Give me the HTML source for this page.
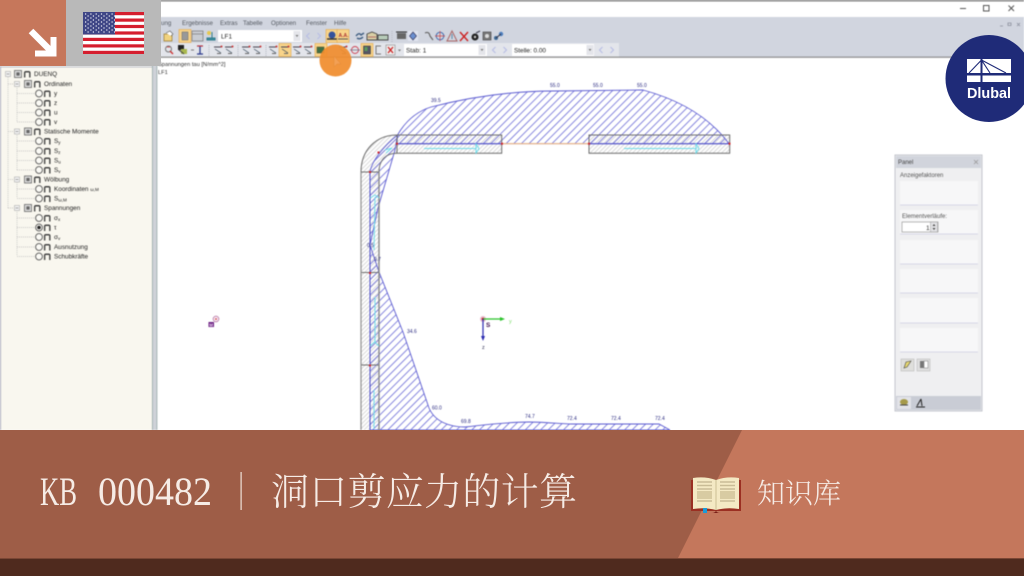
<!DOCTYPE html>
<html lang="zh"><head><meta charset="utf-8"><title>KB 000482</title>
<style>
html,body{margin:0;padding:0;background:#fff;width:1024px;height:576px;overflow:hidden}
svg{display:block}
text{font-family:"Liberation Sans",sans-serif}
.app{filter:blur(.5px)}
.m{font-size:6.2px;fill:#555a62}
.t{font-size:6.4px;fill:#222}
.v{font-size:5px;fill:#2a2a80}
.k{font-family:"Noto Serif CJK SC","Liberation Serif",serif;fill:#f6ece6}
.l{font-family:"Liberation Serif",serif;fill:#f6ece6}
</style></head><body>
<svg width="1024" height="576" viewBox="0 0 1024 576" xmlns="http://www.w3.org/2000/svg">
<defs>
<pattern id="h" width="5.400" height="5.400" patternUnits="userSpaceOnUse" patternTransform="rotate(-45)"><rect width="5.400" height=".8" y="0" fill="#6a6ad6"/></pattern>
<pattern id="g" width="3" height="3" patternUnits="userSpaceOnUse" patternTransform="rotate(-45)"><rect width="3" height=".8" fill="#d0d0d0"/></pattern>
<symbol id="ic" viewBox="0 0 7 7" overflow="visible"><path d="M.7 7V2Q.7.8 2 .8H5Q6.3.8 6.3 2V7" fill="none" stroke="#444" stroke-width="1.500"/></symbol>
<g id="rad"><circle r="3.400" fill="#fbfaf5" stroke="#555" stroke-width=".9"/></g>
<g id="leaf"><use href="#rad"/><use href="#ic" x="5" y="-3" width="6.500" height="6.500"/></g>
<g id="chk"><rect x="-3.500" y="-3.500" width="7" height="7" fill="#e2e2e2" stroke="#666" stroke-width=".8"/><rect x="-1.700" y="-1.700" width="3.400" height="3.400" fill="#666"/></g>
<g id="exp"><rect x="-2.500" y="-2.500" width="5" height="5" fill="#f5f5f5" stroke="#aaa" stroke-width=".6"/><path d="M-1.400 0H1.400" stroke="#666" stroke-width=".6"/></g>
<g id="hl"><rect x="-6" y="-6.500" width="12" height="13" fill="#f8d48a" stroke="#e5a94c" stroke-width=".6"/></g>
<g id="tb"><path d="M-4 -3H4" stroke="#8a4a4a" stroke-width="1"/><path d="M-4 -3L4 -3M-3 -1L3 3" stroke="#345" stroke-width=".7"/><circle cx="3.500" cy="-3.500" r="1" fill="#c33"/><path d="M-1 3.500H3" stroke="#666" stroke-width="1"/></g>
<g id="la"><path d="M1.500 -3L-1.500 0L1.500 3" fill="none" stroke="#b7bde4" stroke-width="1.100"/></g>
<g id="ra"><path d="M-1.500 -3L1.500 0L-1.500 3" fill="none" stroke="#b7bde4" stroke-width="1.100"/></g>
<g id="dd"><rect x="-3.500" y="-5" width="7" height="10" fill="#e4e5ea"/><path d="M-1.500 -1H1.500L0 1Z" fill="#777"/></g>
</defs>

<g class="app">
<rect width="1024" height="430" fill="#fff"/>
<rect width="1024" height="1.500" fill="#858585"/>
<rect y="17" width="1024" height="40" fill="#d1d5df"/>
<rect x="155" y="43" width="464" height="14" fill="#e3e5eb"/>
<rect y="56.600" width="1024" height="1.200" fill="#8c8c8c"/>

<!-- window controls -->
<path d="M960 8.500H966" stroke="#555" stroke-width="1"/>
<rect x="983.500" y="5.500" width="5.500" height="5.500" fill="none" stroke="#555" stroke-width="1"/>
<path d="M1008.500 5.500L1014 11M1014 5.500L1008.500 11" stroke="#555" stroke-width="1"/>
<path d="M1000 26H1003M1008 23H1011V25.500H1008ZM1017 23L1020 26M1020 23L1017 26" stroke="#8a8f9c" stroke-width=".8" fill="none"/>

<!-- menu -->
<text class="m" x="161" y="25">ung</text>
<text class="m" x="182" y="25">Ergebnisse</text>
<text class="m" x="220" y="25">Extras</text>
<text class="m" x="243" y="25">Tabelle</text>
<text class="m" x="271" y="25">Optionen</text>
<text class="m" x="306" y="25">Fenster</text>
<text class="m" x="334" y="25">Hilfe</text>

<!-- toolbar row 1 -->
<path d="M164 34H172V41H164Z" fill="#f1d27e" stroke="#9a7a30" stroke-width=".7"/><path d="M166 33L170 31L173 34L171 36" fill="#fff" stroke="#555" stroke-width=".6"/>
<use href="#hl" x="185" y="36"/><rect x="182" y="32" width="6" height="8" fill="#999" stroke="#666" stroke-width=".5"/>
<rect x="192" y="31" width="11" height="10" fill="#c9ccd2" stroke="#777" stroke-width=".7"/><path d="M192 34H203" stroke="#777" stroke-width=".7"/>
<circle cx="209" cy="33" r="2" fill="#e6c94f"/><path d="M207 38H215V40H207ZM212 32V38" stroke="#2e7c8c" stroke-width="1" fill="#3d8fa0"/>
<rect x="218" y="30" width="84" height="12" fill="#fff"/>
<text class="t" x="221" y="38.500">LF1</text>
<use href="#dd" x="297" y="36"/><use href="#la" x="308" y="36"/><use href="#ra" x="319" y="36"/>
<use href="#hl" x="332" y="36"/><circle cx="332" cy="35" r="3.500" fill="#34529c"/><path d="M327 39H337" stroke="#333" stroke-width="1.500"/>
<use href="#hl" x="343" y="36"/><text x="338.500" y="37" font-size="5" font-weight="700" fill="#a33">A.A.</text><path d="M338 39H348" stroke="#555" stroke-width="1"/>
<path d="M356 36Q359 32 361 35L364 33M357 38Q360 40 363 37" fill="none" stroke="#3e5d80" stroke-width="1.400"/>
<path d="M367 40V34L372 32L377 34V40Z" fill="#d9cfa6" stroke="#444" stroke-width=".9"/><path d="M368 37H376" stroke="#a55" stroke-width=".8"/>
<path d="M378 40V35H388V40Z" fill="#b7cbb9" stroke="#444" stroke-width=".9"/>
<path d="M392 31V42" stroke="#b5b8c2" stroke-dasharray="1 1"/>
<rect x="397" y="33" width="9" height="6" fill="#666"/><path d="M396 32H407" stroke="#222" stroke-width="1"/>
<rect x="408" y="31" width="10" height="10" fill="#dfe3ef"/><path d="M413 32L416.500 36L413 40L409.500 36Z" fill="#6a8fd0" stroke="#335" stroke-width=".6"/>
<path d="M425 33Q429 31 430 36L433 40" fill="none" stroke="#666" stroke-width="1.200"/>
<circle cx="440" cy="36" r="3.800" fill="none" stroke="#3d6ab0" stroke-width="1"/><path d="M435 36H445M440 31V41" stroke="#c44" stroke-width=".7"/>
<path d="M452 31L457 41H447Z" fill="none" stroke="#a66" stroke-width="1"/><path d="M452 34V39" stroke="#58a" stroke-width="1"/>
<path d="M460 32L468 41M468 32L460 41" stroke="#c22" stroke-width="1.400"/>
<circle cx="475" cy="37" r="3.500" fill="#222"/><circle cx="475" cy="37" r="1.200" fill="#ccc"/><path d="M476 33L480 31" stroke="#445" stroke-width="1.200"/>
<rect x="483" y="32" width="8" height="8" fill="#777" stroke="#444" stroke-width=".6"/><circle cx="487" cy="36" r="2" fill="#ddd"/>
<circle cx="496" cy="38" r="2" fill="#3e6a98"/><circle cx="501" cy="34" r="2.200" fill="#4e80c0"/><path d="M496 38L501 34" stroke="#334" stroke-width="1"/>

<!-- toolbar row 2 -->
<circle cx="168.500" cy="49" r="3" fill="none" stroke="#777" stroke-width="1"/><path d="M170 51L173 54" stroke="#c33" stroke-width="1.400"/><path d="M167 47H170" stroke="#c33" stroke-width=".8"/>
<rect x="178" y="45" width="6" height="5" fill="#222"/><rect x="181" y="49" width="6" height="5" fill="#a9b84d"/><path d="M179 50L184 54" stroke="#444"/>
<path d="M191 50H194" stroke="#777"/>
<path d="M197 46H203M200 46V54M197 54H203" stroke="#2b3a8c" stroke-width="1.300"/><path d="M197 46H203" stroke="#c33" stroke-width="1"/>
<path d="M209 45V56" stroke="#b5b8c2" stroke-dasharray="1 1"/>
<use href="#tb" x="218" y="50"/><use href="#tb" x="229" y="50"/>
<path d="M238 45V56" stroke="#b5b8c2" stroke-dasharray="1 1"/>
<use href="#tb" x="246" y="50"/><use href="#tb" x="257" y="50"/>
<path d="M266 45V56" stroke="#b5b8c2" stroke-dasharray="1 1"/>
<use href="#tb" x="273" y="50"/>
<use href="#hl" x="285" y="50"/><use href="#tb" x="285" y="50"/>
<use href="#tb" x="297" y="50"/><use href="#tb" x="308" y="50"/>
<use href="#hl" x="321" y="50"/><rect x="317" y="47" width="7" height="6" fill="#3f6f44" stroke="#553" stroke-width=".6"/>
<use href="#tb" x="343" y="50"/>
<circle cx="355" cy="50" r="3.500" fill="none" stroke="#c45" stroke-width=".9"/><path d="M350 50H360" stroke="#667" stroke-width=".7"/>
<use href="#hl" x="367" y="50"/><rect x="363.500" y="46" width="7" height="8" fill="#556" stroke="#333" stroke-width=".5"/><rect x="364.500" y="47" width="3" height="4" fill="#5a9a5a"/>
<path d="M381 46H376V54H381" fill="none" stroke="#777" stroke-width="1"/>
<rect x="386" y="45" width="9" height="10" fill="#eee" stroke="#888" stroke-width=".6"/><path d="M388 47L393 53M393 47L388 53" stroke="#c22" stroke-width="1.300"/>
<path d="M398 49.500H401L399.500 51.500Z" fill="#777"/>
<rect x="404" y="44" width="83" height="12" fill="#fff"/>
<text class="t" x="406" y="52.500">Stab: 1</text>
<use href="#dd" x="482" y="50"/><use href="#la" x="494" y="50"/><use href="#ra" x="505" y="50"/>
<rect x="512" y="44" width="82" height="12" fill="#fff"/>
<text class="t" x="514" y="52.500">Stelle: 0.00</text>
<use href="#dd" x="590" y="50"/><use href="#la" x="601" y="50"/><use href="#ra" x="612" y="50"/>

<!-- canvas captions -->
<text x="158" y="66" font-size="5.700" fill="#333">Spannungen tau [N/mm^2]</text>
<text x="158" y="74" font-size="5.700" fill="#333">LF1</text>

<!-- tree panel -->
<rect x="0" y="66" width="152" height="364" fill="#f9f7ef"/>
<rect x="0" y="66" width="1" height="364" fill="#aab"/>
<rect x="1" y="66.500" width="151" height=".8" fill="#aab0bb"/>
<rect x="152" y="58" width="5" height="372" fill="#cfd2d8"/>
<rect x="152" y="58" width=".8" height="372" fill="#9aa"/>
<rect x="156.500" y="58" width=".8" height="372" fill="#9aa"/>
<g fill="none" stroke="#bbb" stroke-width=".7" stroke-dasharray="1 1">
<path d="M8 77V208M17 84V122M17 131V170M17 180V198M17 208V256"/>
<path d="M17 93.500H35M17 103H35M17 112.500H35M17 122H35M17 141H35M17 151H35M17 160.500H35M17 170H35M17 189H35M17 198.500H35M17 218H35M17 227.500H35M17 237H35M17 247H35M17 256.500H35M8 84H14M8 131.500H14M8 179.500H14M8 208H14"/>
</g>
<use href="#exp" x="8" y="74"/><use href="#chk" x="18" y="74"/><use href="#ic" x="24" y="71" width="6.500" height="6.500"/><text class="t" x="34" y="76.200">DUENQ</text>
<use href="#exp" x="17" y="84"/><use href="#chk" x="28" y="84"/><use href="#ic" x="34" y="81" width="6.500" height="6.500"/><text class="t" x="44" y="86.200">Ordinaten</text>
<use href="#leaf" x="39" y="93.500"/><text class="t" x="54" y="95.700">y</text>
<use href="#leaf" x="39" y="103"/><text class="t" x="54" y="105.200">z</text>
<use href="#leaf" x="39" y="112.500"/><text class="t" x="54" y="114.700">u</text>
<use href="#leaf" x="39" y="122"/><text class="t" x="54" y="124.200">v</text>
<use href="#exp" x="17" y="131.500"/><use href="#chk" x="28" y="131.500"/><use href="#ic" x="34" y="128.500" width="6.500" height="6.500"/><text class="t" x="44" y="133.700">Statische Momente</text>
<use href="#leaf" x="39" y="141"/><text class="t" x="54" y="143.200">S<tspan font-size="4.500" dy="1">y</tspan></text>
<use href="#leaf" x="39" y="151"/><text class="t" x="54" y="153.200">S<tspan font-size="4.500" dy="1">z</tspan></text>
<use href="#leaf" x="39" y="160.500"/><text class="t" x="54" y="162.700">S<tspan font-size="4.500" dy="1">u</tspan></text>
<use href="#leaf" x="39" y="170"/><text class="t" x="54" y="172.200">S<tspan font-size="4.500" dy="1">v</tspan></text>
<use href="#exp" x="17" y="179.500"/><use href="#chk" x="28" y="179.500"/><use href="#ic" x="34" y="176.500" width="6.500" height="6.500"/><text class="t" x="44" y="181.700">Wölbung</text>
<use href="#leaf" x="39" y="189"/><text class="t" x="54" y="191.200">Koordinaten <tspan font-size="4.500">ω,M</tspan></text>
<use href="#leaf" x="39" y="198.500"/><text class="t" x="54" y="200.700">S<tspan font-size="4.500" dy="1">ω,M</tspan></text>
<use href="#exp" x="17" y="208"/><use href="#chk" x="28" y="208"/><use href="#ic" x="34" y="205" width="6.500" height="6.500"/><text class="t" x="44" y="210.200">Spannungen</text>
<use href="#leaf" x="39" y="218"/><text class="t" x="54" y="220.200">σ<tspan font-size="4.500" dy="1">x</tspan></text>
<use href="#leaf" x="39" y="227.500"/><circle cx="39" cy="227.500" r="1.800" fill="#222"/><text class="t" x="54" y="229.700">τ</text>
<use href="#leaf" x="39" y="237"/><text class="t" x="54" y="239.200">σ<tspan font-size="4.500" dy="1">v</tspan></text>
<use href="#leaf" x="39" y="247"/><text class="t" x="54" y="249.200">Ausnutzung</text>
<use href="#leaf" x="39" y="256.500"/><text class="t" x="54" y="258.700">Schubkräfte</text>

<!-- section walls -->
<path d="M361 430V172H379V430Z" fill="url(#g)"/>
<path d="M397 135H501.700V153.300H397ZM589 135H729.700V153.300H589Z" fill="url(#g)"/>
<path d="M361 172C361 150 376 135 397 135V153.300C386 153.300 379 160 379 172Z" fill="url(#g)"/>

<!-- stress diagram -->
<path d="M397 143.700L397.500 135C405 122 415 112 431 107C470 97 510 91 553 91L643 90C680 100 710 118 729 143.700Z" fill="url(#h)" stroke="#5a5ad0" stroke-width=".9"/>
<path d="M370 172C372 160 385 145 397.500 135L395 150L378 208L370 245Z" fill="url(#h)" stroke="#5a5ad0" stroke-width=".9"/>
<path d="M370 245L379 272L403 332L429 408C435 422 450 427 465 427C490 424 510 422 529 422C545 422 560 424 572 424L659 424L670 430H370Z" fill="url(#h)" stroke="#5a5ad0" stroke-width=".9"/>
<path d="M370 172V430" stroke="#4d4dc8" stroke-width="1"/>
<path d="M397 143.700H501.700M589 143.700H729" stroke="#4d4dc8" stroke-width="1"/>
<path d="M501.700 143.700H589" stroke="#f2bb85" stroke-width="1.200"/>

<!-- section outlines -->
<g fill="none" stroke="#6d6d6d" stroke-width="1">
<path d="M397 135H501.700V153.300H397ZM589 135H729.700V153.300H589Z"/>
<path d="M361 430V172C361 150 376 135 397 135M379 172C379 160 386 153.300 397 153.300"/>
<path d="M361 172H379M361 272.500H379M361 365H379"/>
</g>
<path d="M379 172V430" stroke="#888" stroke-width="1.400"/>
<path d="M361 172V430" stroke="#8f8f8f" stroke-width="1.200"/>

<!-- cyan flow arrows -->
<g fill="none" stroke="#6fdcea" stroke-width="1">
<path d="M424 148.500H476M476 144L479 148.500L476 153ZM624 148.500H696M696 144L699 148.500L696 153Z"/>
<path d="M375 297V343M370 346L374.500 342L379 346M374 390V429M375 197L374 250M370 198L375 195L379 198M385 150L392 148L386 153"/>
</g>

<!-- red nodes -->
<g fill="#d2232a"><rect x="396" y="142.700" width="2" height="2"/><rect x="501" y="142.700" width="2" height="2"/><rect x="588" y="142.700" width="2" height="2"/><rect x="728.500" y="142.700" width="2" height="2"/><rect x="369" y="171" width="2" height="2"/><rect x="369" y="272" width="2" height="2"/><rect x="369" y="364.500" width="2" height="2"/><rect x="377.500" y="151.500" width="2" height="2"/></g>

<!-- values -->
<text class="v" x="431" y="102">39.5</text>
<text class="v" x="550" y="87">55.0</text>
<text class="v" x="593" y="87">55.0</text>
<text class="v" x="637" y="87">55.0</text>
<text class="v" x="367" y="247">0.5</text>
<text class="v" x="374" y="261">9.7</text>
<text class="v" x="407" y="333">34.6</text>
<text class="v" x="432" y="409.500">60.0</text>
<text class="v" x="461" y="423">69.8</text>
<text class="v" x="525" y="418">74.7</text>
<text class="v" x="567" y="420">72.4</text>
<text class="v" x="611" y="420">72.4</text>
<text class="v" x="655" y="420">72.4</text>

<!-- axes -->
<circle cx="483" cy="319" r="3" fill="#e6b8cc"/>
<circle cx="483" cy="319" r="1.300" fill="#c11"/>
<path d="M483 319H501" stroke="#29c329" stroke-width="1.200"/><path d="M500 317L505 319L500 321Z" fill="#29c329"/>
<path d="M483 319V337" stroke="#2a2ab0" stroke-width="1.200"/><path d="M481 336L483 341L485 336Z" fill="#2a2ab0"/>
<text x="509" y="323" font-size="5.500" fill="#7bdc6a">y</text>
<text x="482" y="349" font-size="5.500" fill="#335">z</text>
<text x="486" y="327" font-size="6.500" font-weight="700" fill="#401050">S</text>
<circle cx="216" cy="319" r="2.900" fill="#f5e4ee" stroke="#b36ea0" stroke-width=".7"/><circle cx="216" cy="319" r=".8" fill="#c22"/>
<rect x="208.500" y="322" width="5.500" height="5" fill="#6c1f82"/>
<text x="209.300" y="326.500" font-size="4.500" font-weight="700" fill="#e7d4ee">M</text>

<!-- floating panel -->
<rect x="895" y="155" width="87" height="256" fill="#efeff1" stroke="#c3c6cd" stroke-width="1"/>
<rect x="896" y="156" width="85" height="12" fill="#d1d4dc"/>
<text x="898" y="164" font-size="6" fill="#444">Panel</text>
<path d="M974 160L978 164M978 160L974 164" stroke="#999" stroke-width=".8"/>
<text x="900" y="177" font-size="6" fill="#555">Anzeigefaktoren</text>
<g fill="#f7f7f8">
<rect x="900" y="181" width="78" height="24"/><rect x="900" y="210" width="78" height="24"/><rect x="900" y="240" width="78" height="24"/><rect x="900" y="269" width="78" height="24"/><rect x="900" y="298" width="78" height="25"/><rect x="900" y="328" width="78" height="24"/>
</g>
<path d="M900 205H978M900 234H978M900 264H978M900 293H978M900 323H978M900 352H978" stroke="#cfcfe2" stroke-width=".8"/>
<text x="902" y="218" font-size="6" fill="#555">Elementverläufe:</text>
<rect x="902" y="222" width="36" height="10" fill="#fff" stroke="#999" stroke-width=".7"/>
<text x="926" y="230" font-size="6.500" fill="#333">1</text>
<rect x="930.500" y="222" width="7" height="10" fill="#e3e3e6" stroke="#999" stroke-width=".5"/>
<path d="M932.500 226L934 224L935.500 226ZM932.500 228L934 230L935.500 228Z" fill="#444"/>
<rect x="901" y="359" width="13" height="12" fill="#dfdfdc" stroke="#bbb" stroke-width=".6"/>
<path d="M904 368L906 362L911 361L907 367Z" fill="#e8d970" stroke="#444" stroke-width=".6"/>
<rect x="917" y="359" width="13" height="12" fill="#dfdfdf" stroke="#bbb" stroke-width=".6"/>
<rect x="920" y="361" width="4" height="7" fill="#777"/><rect x="924" y="361" width="4" height="7" fill="#fff" stroke="#777" stroke-width=".5"/>
<rect x="896" y="396" width="85" height="14" fill="#c9ccd5"/>
<rect x="897" y="397" width="14" height="12" fill="#e2e3e8"/>
<ellipse cx="904" cy="402" rx="4" ry="3" fill="#a69a4a"/><path d="M900 405H908" stroke="#444" stroke-width="1"/>
<path d="M917 406L921 399M921 399L922 406M916 407H925" stroke="#222" stroke-width="1" fill="none"/>

<!-- orange pointer halo -->
<circle cx="335.500" cy="60.500" r="16" fill="#f08d2e" opacity=".93"/>
<path d="M334 56V67L337 64L341 64Z" fill="#f3a055" stroke="#e38a35" stroke-width=".5"/>
</g>

<!-- corner tiles -->
<rect x="66" y="0" width="95" height="66" fill="#b9b9b9"/>
<rect x="0" y="0" width="66" height="66" fill="#c6775b"/>
<path d="M31 31L51 51" stroke="#fff" stroke-width="6.500"/>
<path d="M53.500 37V53.500H35" fill="none" stroke="#fff" stroke-width="6"/>

<!-- flag -->
<rect x="83" y="12" width="61" height="42" fill="#fff"/>
<g fill="#d51e2e">
<rect x="83" y="12" width="61" height="3.200"/><rect x="83" y="18.500" width="61" height="3.200"/><rect x="83" y="24.900" width="61" height="3.200"/><rect x="83" y="31.400" width="61" height="3.200"/><rect x="83" y="37.800" width="61" height="3.200"/><rect x="83" y="44.300" width="61" height="3.200"/><rect x="83" y="50.800" width="61" height="3.200"/>
</g>
<rect x="83" y="12" width="32" height="22.500" fill="#3f4686"/>
<g stroke="#e6e8f2" stroke-width="1.200" stroke-dasharray="1.200 4.100" fill="none">
<path d="M85 14H115M85 18H115M85 22H115M85 26H115M85 30H115"/>
<path d="M87.500 16H115M87.500 20H115M87.500 24H115M87.500 28H115M87.500 32H115"/>
</g>

<!-- Dlubal logo -->
<circle cx="989" cy="78.500" r="43.500" fill="#1f2b78"/>
<rect x="967" y="59" width="44" height="23" fill="#fff"/>
<rect x="967" y="73" width="44" height="2.500" fill="#1f2b78"/>
<path d="M981.500 59V82" stroke="#1f2b78" stroke-width="2"/>
<path d="M969 73L981.500 60L990 73M981.500 60L1006 73" fill="none" stroke="#1f2b78" stroke-width="1.100"/>
<text x="967" y="98" font-size="14.500" font-weight="700" fill="#fff" textLength="44" lengthAdjust="spacingAndGlyphs">Dlubal</text>

<!-- banner -->
<rect x="0" y="430" width="1024" height="128" fill="#9e5d47"/>
<path d="M742 430H1024V558H678Z" fill="#c4775c"/>
<rect x="0" y="558" width="1024" height="18" fill="#4f2a1e"/>
<rect x="0" y="558" width="1024" height="1" fill="#7a4634"/>

<text class="l" x="40" y="505" font-size="40" textLength="37" lengthAdjust="spacingAndGlyphs">KB</text>
<text class="l" x="98" y="505" font-size="40" textLength="114" lengthAdjust="spacingAndGlyphs">000482</text>
<rect x="240.500" y="472" width="1.200" height="38" fill="#efe2da"/>
<text class="k" x="271" y="505" font-size="38" textLength="306" font-weight="300">洞口剪应力的计算</text>

<!-- book -->
<path d="M691 480H741V511H691Z" fill="#9b2f22"/>
<path d="M716 510Q716 513 721 513H711Q716 513 716 510Z" fill="#7a2018"/>
<path d="M693 478Q705 476 716 480Q727 476 739 478V509Q727 507 716 510Q705 507 693 509Z" fill="#f4e9c4"/>
<path d="M716 480V510" stroke="#cdbf94" stroke-width="1"/>
<g fill="none" stroke="#c9bc96" stroke-width="1.500">
<path d="M697 482H712M697 485.500H712M697 489H712M697 501H712M720 482H735M720 485.500H735M720 489H735M720 501H735"/>
</g>
<rect x="697" y="491" width="15" height="8" fill="#d8cba2"/>
<rect x="720" y="491" width="15" height="8" fill="#d8cba2"/>
<rect x="703" y="508" width="4" height="5" fill="#1a9bd8"/>
<text class="k" x="757" y="503" font-size="28" textLength="84" font-weight="300">知识库</text>
</svg>
</body></html>
